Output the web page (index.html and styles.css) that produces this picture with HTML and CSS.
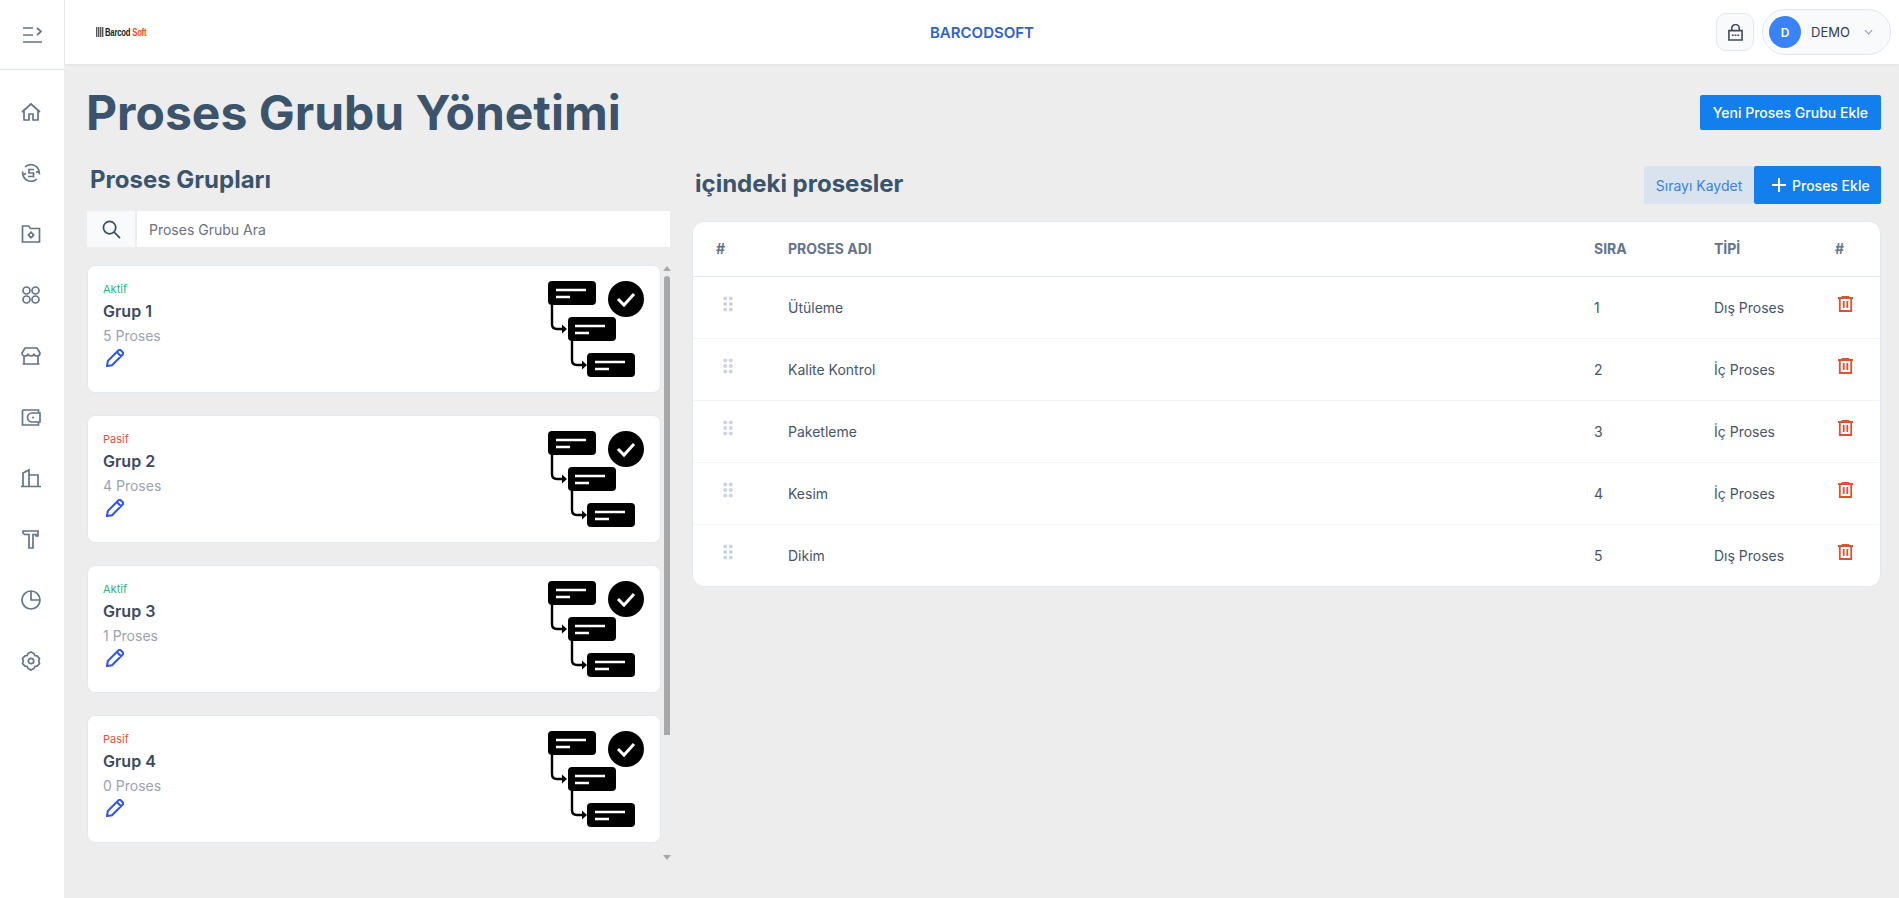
FILE: index.html
```html
<!DOCTYPE html>
<html lang="tr">
<head>
    <meta charset="utf-8">
    <title>Proses Grubu Yönetimi</title>
    <link rel="stylesheet" href="styles.css">
</head>
<body>
    <svg class="defs" width="0" height="0">
        <symbol id="flow" viewBox="0 0 96 96">
            <rect x="0" y="0" width="48" height="24" rx="4" fill="#000"/>
            <rect x="20" y="36" width="48" height="24" rx="4" fill="#000"/>
            <rect x="39" y="72" width="48" height="24" rx="4" fill="#000"/>
            <path d="M8 9h30M8 16h14M27 45h30M27 52h14M47 81h30M47 88h14" stroke="#fff" stroke-width="2.6" fill="none"/>
            <path d="M4 24v19q0 5 5 5h7M24 60v19q0 5 5 5h7" stroke="#000" stroke-width="2.4" fill="none"/>
            <path d="M14 43.500l5 4.500-5 4.500zM34 79.500l5 4.500-5 4.500z" fill="#000"/>
            <circle cx="78" cy="18" r="18" fill="#000"/>
            <path d="M70 18l6 6 10-11" stroke="#fff" stroke-width="3" fill="none"/>
        </symbol>
        <symbol id="pencil" viewBox="0 0 18 18">
            <path d="M1 17l.8-5L12.500 1.300q1.200-1 2.300 0l1.900 1.900q1 1.100 0 2.300L6 16.200zM10.800 3l4.200 4.200" fill="none" stroke="currentColor" stroke-width="2"/>
        </symbol>
        <symbol id="trash" viewBox="0 0 15 16">
            <path d="M0 2h15M4.500 2V.9h6V2M1.800 2v13h11.400V2M5.700 5v7M9.300 5v7" fill="none" stroke="currentColor" stroke-width="1.800"/>
        </symbol>
        <symbol id="dots" viewBox="0 0 10 16">
            <circle cx="2.200" cy="2.500" r="2"/><circle cx="7.800" cy="2.500" r="2"/>
            <circle cx="2.200" cy="8" r="2"/><circle cx="7.800" cy="8" r="2"/>
            <circle cx="2.200" cy="13.500" r="2"/><circle cx="7.800" cy="13.500" r="2"/>
        </symbol>
    </svg>

    <div class="app">
        <aside class="sidebar">
            <div class="side-top">
                <svg class="toggle" viewBox="0 0 20 20" width="20" height="20"><path d="M0 3h10M0 10h10M0 17h19M14 3l4 3.500-4 3.500" fill="none" stroke="#64748b" stroke-width="1.700"/></svg>
            </div>
            <nav class="side-nav">
                <svg class="nav-icon" viewBox="0 0 20 20"><path d="M1 10l9-8 9 8M3 8.500V18h5v-6h4v6h5V8.500"/></svg>
                <svg class="nav-icon" viewBox="0 0 20 20"><path d="M4 4a8.500 8.500 0 0 1 14 4M16 16a8.500 8.500 0 0 1-14-4M1.500 8.500L2 12l3-1.500M18.500 11.500L18 8l-3 1.500M13 6.500H8v3.500h4.500v3.500H7"/></svg>
                <svg class="nav-icon" viewBox="0 0 20 20"><path d="M1.500 2h6l2 2.500h9V18h-17z"/><circle cx="10" cy="11" r="2"/><path d="M10 7.500V9M10 13v1.500M6.500 11H8M12 11h1.500"/></svg>
                <svg class="nav-icon" viewBox="0 0 20 20"><rect x="2" y="2" width="7" height="7" rx="3.500"/><rect x="11" y="2" width="7" height="7" rx="3.500"/><rect x="2" y="11" width="7" height="7" rx="3.500"/><rect x="11" y="11" width="7" height="7" rx="3.500"/></svg>
                <svg class="nav-icon" viewBox="0 0 20 20"><path d="M4 2h12l3 5q0 3-3 3-3 0-3-2.500Q13 10 10 10T7 7.500Q7 10 4 10 1 10 1 7zM3 10v8h14v-8M1.500 18h17"/></svg>
                <svg class="nav-icon" viewBox="0 0 20 20"><path d="M1.500 3h16v3M1.500 3v15h16v-3"/><path d="M19 6H11a3 3 0 0 0 0 9h8zM11 10.500h2"/></svg>
                <svg class="nav-icon" viewBox="0 0 20 20"><path d="M0 18.500h20M2 18.500V5l6-3v16.500M8 7h9v11.500"/></svg>
                <svg class="nav-icon" viewBox="0 0 20 20"><path d="M2 2h15v5h-2V5.500h-3V19H8V5.500H3.500L2 4z"/></svg>
                <svg class="nav-icon" viewBox="0 0 20 20"><circle cx="10" cy="10" r="9"/><path d="M10 1v9h9"/></svg>
                <svg class="nav-icon" viewBox="0 0 20 20"><path d="M7 2.500L10 1l3 1.500.8 2 2.200.3 2.500 2.700-.8 2.500.8 2.500-2.500 2.700-2.200.3-.8 2L10 19l-3-1.500-.8-2-2.200-.3-2.500-2.700.8-2.500-.8-2.500L4 4.800l2.200-.3z"/><circle cx="10" cy="10" r="2.700"/></svg>
            </nav>
        </aside>

        <div class="content">
            <header class="topbar">
                <div class="logo"><span class="logo-code"></span><span class="logo-text">Barcod <em>Soft</em></span></div>
                <div class="brand">BARCODSOFT</div>
                <div class="top-actions">
                    <button class="lock-btn">
                        <svg viewBox="0 0 16 18" width="15" height="17"><path d="M4 7V4.500a4 4 0 0 1 8 0V7M1 7h14v10H1z" fill="none" stroke="#3f4a5a" stroke-width="1.700"/><path d="M4 12h2M7 12h2M10 12h2" stroke="#3f4a5a" stroke-width="1.500"/></svg>
                    </button>
                    <div class="user-pill">
                        <span class="avatar">D</span>
                        <span class="user-name">DEMO</span>
                        <svg viewBox="0 0 10 6" width="9" height="6"><path d="M1 1l4 4 4-4" fill="none" stroke="#94a3b8" stroke-width="1.300"/></svg>
                    </div>
                </div>
            </header>

            <main class="page">
                <div class="page-head">
                    <h1>Proses Grubu Yönetimi</h1>
                    <button class="btn btn-primary">Yeni Proses Grubu Ekle</button>
                </div>

                <div class="columns">
                    <section class="groups">
                        <h2 class="groups-title">Proses Grupları</h2>
                        <div class="search">
                            <span class="search-icon">
                                <svg viewBox="0 0 20 20" width="19" height="19"><circle cx="8" cy="8" r="6.500" fill="none" stroke="#3f4a5a" stroke-width="1.800"/><path d="M12.500 12.500L19 19" stroke="#3f4a5a" stroke-width="1.800"/></svg>
                            </span>
                            <input class="search-input" placeholder="Proses Grubu Ara">
                        </div>
                        <div class="group-scroll">
                            <div class="group-list">
                                <div class="group-card">
                                    <div>
                                        <div class="state active">Aktif</div>
                                        <div class="group-name">Grup 1</div>
                                        <div class="group-count">5 Proses</div>
                                        <svg class="edit"><use href="#pencil"/></svg>
                                    </div>
                                    <svg class="flow"><use href="#flow"/></svg>
                                </div>
                                <div class="group-card">
                                    <div>
                                        <div class="state passive">Pasif</div>
                                        <div class="group-name">Grup 2</div>
                                        <div class="group-count">4 Proses</div>
                                        <svg class="edit"><use href="#pencil"/></svg>
                                    </div>
                                    <svg class="flow"><use href="#flow"/></svg>
                                </div>
                                <div class="group-card">
                                    <div>
                                        <div class="state active">Aktif</div>
                                        <div class="group-name">Grup 3</div>
                                        <div class="group-count">1 Proses</div>
                                        <svg class="edit"><use href="#pencil"/></svg>
                                    </div>
                                    <svg class="flow"><use href="#flow"/></svg>
                                </div>
                                <div class="group-card">
                                    <div>
                                        <div class="state passive">Pasif</div>
                                        <div class="group-name">Grup 4</div>
                                        <div class="group-count">0 Proses</div>
                                        <svg class="edit"><use href="#pencil"/></svg>
                                    </div>
                                    <svg class="flow"><use href="#flow"/></svg>
                                </div>
                            </div>
                            <div class="scrollbar">
                                <span class="arrow-up"></span>
                                <span class="thumb"></span>
                                <span class="arrow-down"></span>
                            </div>
                        </div>
                    </section>

                    <section class="processes">
                        <div class="processes-head">
                            <h2>içindeki prosesler</h2>
                            <div class="btn-group">
                                <button class="btn btn-light">Sırayı Kaydet</button>
                                <button class="btn btn-primary btn-add"><span class="plus"></span>Proses Ekle</button>
                            </div>
                        </div>
                        <div class="table-card">
                            <table>
                                <colgroup>
                                    <col class="c-drag"><col class="c-name"><col class="c-order"><col class="c-type"><col class="c-del">
                                </colgroup>
                                <thead>
                                    <tr><th>#</th><th>PROSES ADI</th><th>SIRA</th><th>TİPİ</th><th>#</th></tr>
                                </thead>
                                <tbody>
                                    <tr>
                                        <td><svg class="dots"><use href="#dots"/></svg></td>
                                        <td>Ütüleme</td><td>1</td><td>Dış Proses</td>
                                        <td><svg class="trash"><use href="#trash"/></svg></td>
                                    </tr>
                                    <tr>
                                        <td><svg class="dots"><use href="#dots"/></svg></td>
                                        <td>Kalite Kontrol</td><td>2</td><td>İç Proses</td>
                                        <td><svg class="trash"><use href="#trash"/></svg></td>
                                    </tr>
                                    <tr>
                                        <td><svg class="dots"><use href="#dots"/></svg></td>
                                        <td>Paketleme</td><td>3</td><td>İç Proses</td>
                                        <td><svg class="trash"><use href="#trash"/></svg></td>
                                    </tr>
                                    <tr>
                                        <td><svg class="dots"><use href="#dots"/></svg></td>
                                        <td>Kesim</td><td>4</td><td>İç Proses</td>
                                        <td><svg class="trash"><use href="#trash"/></svg></td>
                                    </tr>
                                    <tr>
                                        <td><svg class="dots"><use href="#dots"/></svg></td>
                                        <td>Dikim</td><td>5</td><td>Dış Proses</td>
                                        <td><svg class="trash"><use href="#trash"/></svg></td>
                                    </tr>
                                </tbody>
                            </table>
                        </div>
                    </section>
                </div>
            </main>
        </div>
    </div>
</body>
</html>
```

FILE: styles.css
```css
* {
    box-sizing: border-box;
}
html, body {
    height: 100%;
}
body {
    margin: 0;
    font-family: Inter, "Liberation Sans", sans-serif;
    background: #ededed;
    color: #3f4a5a;
    overflow: hidden;
}
button, input {
    font-family: inherit;
}
.defs {
    position: absolute;
}
.app {
    display: flex;
    height: 898px;
}

/* sidebar */
.sidebar {
    width: 65px;
    flex: none;
    background: #fff;
    border-right: 1px solid #e9ecf1;
}
.side-top {
    height: 70px;
    border-bottom: 1px solid #e2e8f0;
    padding: 25px 0 0 23px;
}
.toggle {
    display: block;
}
.side-nav {
    display: flex;
    flex-direction: column;
    gap: 41px;
    padding: 32px 0 0 21px;
}
.nav-icon {
    width: 20px;
    height: 20px;
    display: block;
    fill: none;
    stroke: #64748b;
    stroke-width: 1.700;
}

/* top bar */
.content {
    flex: 1;
    min-width: 0;
}
.topbar {
    height: 64px;
    background: #fff;
    box-shadow: 0 1px 2px rgba(0, 0, 0, 0.05);
    display: grid;
    grid-template-columns: 1fr auto 1fr;
    align-items: center;
    padding: 0 8px;
}
.logo {
    display: flex;
    align-items: center;
    gap: 1px;
    margin-left: 23px;
    font-family: "Liberation Sans", sans-serif;
    font-size: 11px;
    font-weight: 700;
    letter-spacing: -0.3px;
    color: #222;
}
.logo-text {
    transform: scaleX(0.7);
    transform-origin: left center;
    white-space: nowrap;
}
.logo em {
    font-style: normal;
    color: #f04e1c;
}
.logo-code {
    width: 8px;
    height: 10px;
    background: repeating-linear-gradient(90deg, #555 0 1px, #bbb 1px 2px);
}
.brand {
    font-size: 15px;
    font-weight: 600;
    color: #2f62c9;
}
.top-actions {
    display: flex;
    justify-content: flex-end;
    align-items: center;
    gap: 8px;
}
.lock-btn {
    width: 38px;
    height: 38px;
    padding: 0;
    border: 1px solid #e2e8f0;
    border-radius: 10px;
    background: #f8fafc;
    display: flex;
    align-items: center;
    justify-content: center;
}
.user-pill {
    width: 129px;
    height: 46px;
    border: 1px solid #e2e8f0;
    border-radius: 23px;
    background: #f8fafc;
    display: flex;
    align-items: center;
    padding-left: 6px;
    font-size: 13px;
}
.avatar {
    width: 32px;
    height: 32px;
    border-radius: 50%;
    background: #3b82f6;
    color: #fff;
    font-weight: 600;
    font-size: 12px;
    display: flex;
    align-items: center;
    justify-content: center;
}
.user-name {
    margin: 0 14px 0 10px;
    color: #333c4c;
}

/* page */
.page {
    padding: 0 18px 0 21px;
}
.page-head {
    display: flex;
    justify-content: space-between;
    align-items: center;
    height: 86px;
    padding-top: 10px;
}
h1 {
    margin: 0;
    font-size: 48px;
    font-weight: 700;
    color: #3b546b;
}
h2 {
    margin: 0;
    font-size: 24px;
    font-weight: 700;
    color: #3b546b;
}
.btn {
    border: 0;
    border-radius: 2px;
    font-size: 14px;
    cursor: pointer;
}
.btn-primary {
    height: 35px;
    padding: 0 13px;
    background: #127fed;
    color: #fff;
    font-weight: 500;
}
.columns {
    display: flex;
    gap: 19px;
}

/* left column */
.groups {
    width: 587px;
    flex: none;
    padding-left: 1px;
}
.groups-title {
    height: 61px;
    padding: 15px 0 0 3px;
}
.search {
    display: flex;
    width: 583px;
    height: 36px;
    gap: 2px;
    margin-bottom: 18px;
}
.search-icon {
    width: 48px;
    background: #f8fafc;
    display: flex;
    align-items: center;
    justify-content: center;
}
.search-input {
    flex: 1;
    border: 0;
    padding: 0 12px;
    background: #fff;
    font-size: 14px;
}
.search-input::placeholder {
    color: #6b7280;
}
.group-scroll {
    display: flex;
    height: 598px;
}
.group-list {
    width: 574px;
    flex: none;
}
.scrollbar {
    width: 12px;
    display: flex;
    flex-direction: column;
    align-items: center;
}
.arrow-up, .arrow-down {
    width: 0;
    height: 0;
    border-left: 4px solid transparent;
    border-right: 4px solid transparent;
}
.arrow-up {
    margin-top: 1px;
    border-bottom: 5px solid #a8a8a8;
}
.thumb {
    width: 6px;
    height: 459px;
    margin: 5px 0 120px;
    border-radius: 3px 3px 0 0;
    background: #a8a8a8;
}
.arrow-down {
    border-top: 5px solid #a8a8a8;
}
.group-card {
    height: 128px;
    margin-bottom: 22px;
    background: #fff;
    border: 1px solid #e2e8f0;
    border-radius: 8px;
    display: flex;
    justify-content: space-between;
    padding: 15px 16px 0 15px;
}
.state {
    font-size: 11px;
    line-height: 16px;
}
.active {
    color: #28b77a;
}
.passive {
    color: #e5533d;
}
.group-name {
    font-size: 16px;
    font-weight: 600;
    line-height: 24px;
    margin-top: 2px;
    color: #3b4a5f;
}
.group-count {
    font-size: 14px;
    line-height: 20px;
    margin-top: 3px;
    color: #9ca3af;
}
.edit {
    display: block;
    width: 18px;
    height: 18px;
    margin: 3px 0 0 3px;
    color: #2f54eb;
}
.flow {
    width: 96px;
    height: 96px;
}

/* right column */
.processes {
    flex: 1;
    min-width: 0;
}
.processes-head {
    display: flex;
    justify-content: space-between;
    align-items: center;
    height: 38px;
    margin: 16px 0 17px;
    padding-left: 3px;
}
.processes-head h2 {
    padding-bottom: 4px;
}
.btn-group {
    display: flex;
}
.btn-group .btn {
    height: 38px;
}
.btn-light {
    width: 110px;
    background: #d9e3ee;
    color: #3b82e0;
    font-size: 14px;
}
.btn-add {
    width: 127px;
    display: flex;
    align-items: center;
    gap: 6px;
    padding: 0 0 0 18px;
}
.plus {
    width: 14px;
    height: 14px;
    background:
        linear-gradient(#fff, #fff) center / 100% 2px no-repeat,
        linear-gradient(#fff, #fff) center / 2px 100% no-repeat;
}
.table-card {
    background: #fff;
    border: 1px solid #e2e8f0;
    border-radius: 12px;
    overflow: hidden;
}
table {
    width: 100%;
    table-layout: fixed;
    border-collapse: collapse;
    font-size: 14px;
}
.c-drag { width: 71px; }
.c-order { width: 120px; }
.c-type { width: 121px; }
.c-del { width: 69px; }
th {
    height: 54px;
    padding: 0 24px;
    text-align: left;
    font-size: 14px;
    font-weight: 700;
    color: #64748b;
    border-bottom: 1px solid #e2e8f0;
}
td {
    height: 62px;
    padding: 0 24px;
    color: #475569;
    border-bottom: 1px solid #f1f5f9;
}
th:first-child, td:first-child {
    padding-left: 23px;
}
tr:last-child td {
    border-bottom: 0;
}
.dots {
    display: block;
    width: 10px;
    height: 16px;
    margin: -6px 0 0 7px;
    fill: #cbd5e1;
}
.trash {
    display: block;
    width: 15px;
    height: 16px;
    margin: -6px 0 0 3px;
    color: #e0512f;
}
```
